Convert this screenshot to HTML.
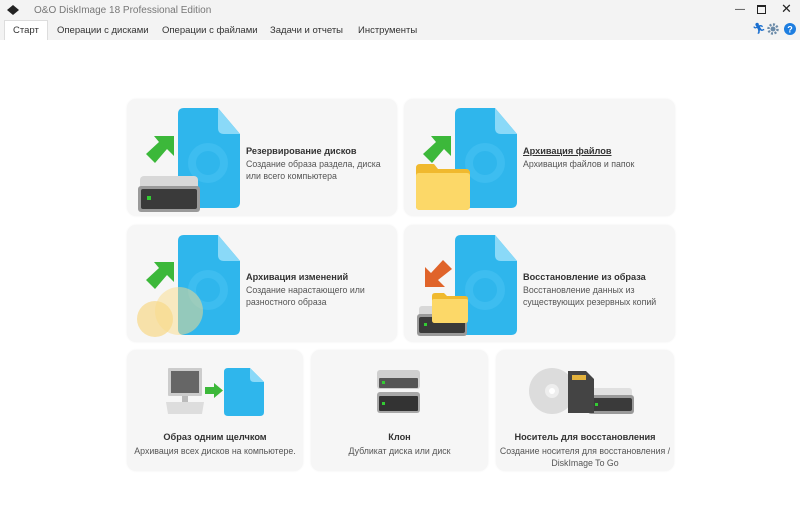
<!DOCTYPE html>
<html><head><meta charset="utf-8"><style>
*{margin:0;padding:0;box-sizing:border-box}
body{width:800px;height:532px;overflow:hidden;background:#fff;font-family:"Liberation Sans","Noto Sans CJK SC",sans-serif;position:relative;color:#222}
.tb{position:absolute;left:0;top:0;width:800px;height:40px;background:#f3f3f3}
.title{position:absolute;left:34px;top:5px;font-size:10px;color:#777}
.tab{position:absolute;top:25px;font-size:9.5px;color:#333}
.act{position:absolute;left:4px;top:20px;width:44px;height:20px;background:#fff;border:1px solid #ddd;border-bottom:none}
.card{position:absolute;background:#f6f6f6;border-radius:9px;box-shadow:0 0 2px rgba(0,0,0,.06)}
.t{position:absolute;font-size:9.2px;font-weight:bold;color:#333}
.d{position:absolute;font-size:8.8px;color:#555;line-height:12px}
.c{text-align:center}
svg{position:absolute}
</style></head><body>
<div class="tb"></div>
<svg style="left:6px;top:4px" width="14" height="12"><path d="M7 1 L13 6 L7 11 L1 6Z" fill="#222"/></svg>
<div class="title">O&amp;O DiskImage 18 Professional Edition</div>
<div style="position:absolute;left:735px;top:4px;font-size:10px;color:#222">&#8212;</div>
<div style="position:absolute;left:757px;top:5px;width:9px;height:9px;border:1.3px solid #222;border-top-width:2px"></div>
<div style="position:absolute;left:781px;top:1px;font-size:13px;color:#222">✕</div>
<div class="act"></div>
<div class="tab" style="left:13px">Старт</div>
<div class="tab" style="left:57px">Операции с дисками</div>
<div class="tab" style="left:162px">Операции с файлами</div>
<div class="tab" style="left:270px">Задачи и отчеты</div>
<div class="tab" style="left:358px">Инструменты</div>
<div style="position:absolute;left:752px;top:22px;font-size:11px;color:#1a6fd0">🏃︎</div>
<svg style="left:767px;top:23px" width="12" height="12"><circle cx="6" cy="6" r="4.5" fill="none" stroke="#6a8aa8" stroke-width="2.5" stroke-dasharray="2 1.5"/><circle cx="6" cy="6" r="2.5" fill="#6a8aa8"/></svg>
<svg style="left:784px;top:23px" width="12" height="12"><circle cx="6" cy="6" r="6" fill="#1e7ee0"/><text x="6" y="9.5" font-size="9" font-weight="bold" fill="#fff" text-anchor="middle" font-family="Liberation Sans">?</text></svg>

<div class="card" style="left:127px;top:99px;width:270px;height:117px"></div>
<div class="card" style="left:404px;top:99px;width:271px;height:117px"></div>
<div class="card" style="left:127px;top:225px;width:270px;height:117px"></div>
<div class="card" style="left:404px;top:225px;width:271px;height:117px"></div>
<div class="card" style="left:127px;top:350px;width:176px;height:121px"></div>
<div class="card" style="left:311px;top:350px;width:177px;height:121px"></div>
<div class="card" style="left:496px;top:350px;width:178px;height:121px"></div>

<svg style="left:178px;top:108px" width="62" height="100"><path d="M6 0H40L62 26V94Q62 100 56 100H6Q0 100 0 94V6Q0 0 6 0Z" fill="#2fb6ec"/><path d="M40 0V20Q40 26 46 26H62Z" fill="#8ad9f8"/><circle cx="30" cy="55" r="16" fill="none" stroke="#3dbdf0" stroke-width="8"/></svg>
<svg style="left:455px;top:108px" width="62" height="100"><path d="M6 0H40L62 26V94Q62 100 56 100H6Q0 100 0 94V6Q0 0 6 0Z" fill="#2fb6ec"/><path d="M40 0V20Q40 26 46 26H62Z" fill="#8ad9f8"/><circle cx="30" cy="55" r="16" fill="none" stroke="#3dbdf0" stroke-width="8"/></svg>
<svg style="left:178px;top:235px" width="62" height="100"><path d="M6 0H40L62 26V94Q62 100 56 100H6Q0 100 0 94V6Q0 0 6 0Z" fill="#2fb6ec"/><path d="M40 0V20Q40 26 46 26H62Z" fill="#8ad9f8"/><circle cx="30" cy="55" r="16" fill="none" stroke="#3dbdf0" stroke-width="8"/></svg>
<svg style="left:455px;top:235px" width="62" height="100"><path d="M6 0H40L62 26V94Q62 100 56 100H6Q0 100 0 94V6Q0 0 6 0Z" fill="#2fb6ec"/><path d="M40 0V20Q40 26 46 26H62Z" fill="#8ad9f8"/><circle cx="30" cy="55" r="16" fill="none" stroke="#3dbdf0" stroke-width="8"/></svg>
<svg style="left:224px;top:368px" width="40" height="48"><path d="M4 0H26L40 14V44Q40 48 36 48H4Q0 48 0 44V4Q0 0 4 0Z" fill="#2fb6ec"/><path d="M26 0V10Q26 14 30 14H40Z" fill="#8ad9f8"/></svg>

<svg style="left:146px;top:136px" width="28" height="27"><path d="M8 0H28V20L21 13L9 27L0 18L13 6Z" fill="#3cb83a"/></svg>
<svg style="left:423px;top:136px" width="28" height="27"><path d="M8 0H28V20L21 13L9 27L0 18L13 6Z" fill="#3cb83a"/></svg>
<svg style="left:146px;top:262px" width="28" height="27"><path d="M8 0H28V20L21 13L9 27L0 18L13 6Z" fill="#3cb83a"/></svg>
<svg style="left:425px;top:260px" width="28" height="27"><path d="M0 7V27H20L13 20L27 9L18 0L6 13Z" fill="#e0642a"/></svg>
<svg style="left:205px;top:383px" width="18" height="15"><path d="M0 4H9V0L18 7.5L9 15V11H0Z" fill="#3cb83a"/></svg>

<svg style="left:138px;top:176px" width="62" height="36"><rect x="2" y="0" width="58" height="14" rx="4" fill="#d8d8d8"/><rect x="0" y="10" width="62" height="26" rx="3" fill="#9a9a9a"/><rect x="3" y="13" width="56" height="20" rx="2" fill="#3a3a3a"/><rect x="9" y="20" width="4" height="4" fill="#3c3"/></svg>
<svg style="left:417px;top:306px" width="50" height="30"><rect x="2" y="0" width="46" height="12" rx="3" fill="#d8d8d8"/><rect x="0" y="8" width="50" height="22" rx="3" fill="#9a9a9a"/><rect x="2" y="11" width="46" height="16" rx="2" fill="#3a3a3a"/><rect x="7" y="17" width="3" height="3" fill="#3c3"/></svg>
<svg style="left:377px;top:370px" width="43" height="19"><rect x="0" y="0" width="43" height="19" rx="3" fill="#cfcfcf"/><rect x="2" y="8" width="39" height="10" rx="1" fill="#555"/><rect x="5" y="11" width="3" height="3" fill="#3c3"/></svg>
<svg style="left:377px;top:392px" width="43" height="21"><rect x="0" y="0" width="43" height="21" rx="3" fill="#a8a8a8"/><rect x="2" y="4" width="39" height="15" rx="1" fill="#333"/><rect x="5" y="10" width="3" height="3" fill="#3c3"/></svg>
<svg style="left:588px;top:388px" width="46" height="26"><rect x="2" y="0" width="42" height="10" rx="3" fill="#e0e0e0"/><rect x="0" y="7" width="46" height="19" rx="3" fill="#9a9a9a"/><rect x="2" y="10" width="42" height="13" rx="2" fill="#3a3a3a"/><rect x="7" y="15" width="3" height="3" fill="#3c3"/></svg>

<svg style="left:416px;top:164px" width="54" height="46"><path d="M0 4Q0 0 4 0H18L22 5H50Q54 5 54 9V42Q54 46 50 46H4Q0 46 0 42Z" fill="#f0b92e"/><path d="M0 12Q0 9 3 9H51Q54 9 54 12V42Q54 46 50 46H4Q0 46 0 42Z" fill="#fcd868"/></svg>
<svg style="left:432px;top:293px" width="36" height="30"><path d="M0 3Q0 0 3 0H12L15 3H33Q36 3 36 6V27Q36 30 33 30H3Q0 30 0 27Z" fill="#f0b92e"/><path d="M0 8Q0 6 2 6H34Q36 6 36 8V27Q36 30 33 30H3Q0 30 0 27Z" fill="#fcd868"/></svg>

<svg style="left:137px;top:285px" width="66" height="54"><circle cx="18" cy="34" r="18" fill="#f7cf6a" opacity=".55"/><circle cx="42" cy="26" r="24" fill="#f9dc8a" opacity=".5"/></svg>

<svg style="left:166px;top:368px" width="38" height="48"><rect x="2" y="0" width="34" height="28" rx="1" fill="#ccc"/><rect x="5" y="3" width="28" height="22" fill="#666"/><rect x="16" y="28" width="6" height="6" fill="#bbb"/><path d="M0 34H38L36 46H2Z" fill="#ddd"/></svg>

<svg style="left:528px;top:367px" width="70" height="48"><circle cx="24" cy="24" r="23" fill="#dcdcdc"/><circle cx="24" cy="24" r="7" fill="#eee"/><circle cx="24" cy="24" r="3" fill="#fff"/><path d="M40 4H58L66 12V46H40Z" fill="#444"/><rect x="44" y="8" width="14" height="5" fill="#e3b23c"/></svg>

<div class="t" style="left:246px;top:146px">Резервирование дисков</div>
<div class="d" style="left:246px;top:158px">Создание образа раздела, диска<br>или всего компьютера</div>
<div class="t" style="left:523px;top:146px;text-decoration:underline">Архивация файлов</div>
<div class="d" style="left:523px;top:158px">Архивация файлов и папок</div>
<div class="t" style="left:246px;top:272px">Архивация изменений</div>
<div class="d" style="left:246px;top:284px">Создание нарастающего или<br>разностного образа</div>
<div class="t" style="left:523px;top:272px">Восстановление из образа</div>
<div class="d" style="left:523px;top:284px">Восстановление данных из<br>существующих резервных копий</div>
<div class="t c" style="left:127px;width:176px;top:432px">Образ одним щелчком</div>
<div class="d c" style="left:127px;width:176px;top:445px">Архивация всех дисков на компьютере.</div>
<div class="t c" style="left:311px;width:177px;top:432px">Клон</div>
<div class="d c" style="left:311px;width:177px;top:445px">Дубликат диска или диск</div>
<div class="t c" style="left:496px;width:178px;top:432px">Носитель для восстановления</div>
<div class="d c" style="left:496px;width:178px;top:445px">Создание носителя для восстановления /<br>DiskImage To Go</div>
</body></html>
